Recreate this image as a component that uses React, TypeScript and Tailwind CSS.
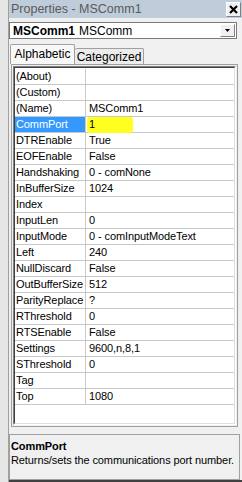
const rows: [string, string][] = [
  ['(About)', ''],
  ['(Custom)', ''],
  ['(Name)', 'MSComm1'],
  ['CommPort', '1'],
  ['DTREnable', 'True'],
  ['EOFEnable', 'False'],
  ['Handshaking', '0 - comNone'],
  ['InBufferSize', '1024'],
  ['Index', ''],
  ['InputLen', '0'],
  ['InputMode', '0 - comInputModeText'],
  ['Left', '240'],
  ['NullDiscard', 'False'],
  ['OutBufferSize', '512'],
  ['ParityReplace', '?'],
  ['RThreshold', '0'],
  ['RTSEnable', 'False'],
  ['Settings', '9600,n,8,1'],
  ['SThreshold', '0'],
  ['Tag', ''],
  ['Top', '1080'],
];

function GridRow({ name, value }: { name: string; value: string }) {
  const selected = name === 'CommPort';
  return (
    <div className="flex h-[16px] border-b border-[#c8c8c8]">
      <div
        className={
          selected
            ? 'flex w-[71px] items-center overflow-hidden whitespace-nowrap border-r border-[#c8c8c8] bg-[#3399ff] pl-[1px] text-white'
            : 'flex w-[71px] items-center overflow-hidden whitespace-nowrap border-r border-[#c8c8c8] pl-[1px]'
        }
      >
        {name}
      </div>
      <div className="flex flex-1 items-center pl-[3px]">
        {selected ? (
          <span className="-ml-[2px] flex h-[16px] w-[46px] items-center rounded-[3px] bg-[#ffff20] pl-[2px]">
            {value}
          </span>
        ) : (
          value
        )}
      </div>
    </div>
  );
}

export default function App() {
  return (
    <div
      className="flex h-[482px] w-[242px] bg-[#f0f0f0] text-black"
      style={{ fontFamily: '"Liberation Sans", Arial, sans-serif' }}
    >
      <div className="w-[9px] border-r border-[#a0a0a0] bg-[#e6e6e6]" />
      <div className="flex flex-1 flex-col">
        <div className="flex h-[18px] items-center bg-[#bfcddb] pl-[2px] pr-[1px]">
          <span className="flex-1 text-[12.5px] text-[#5a5a5a]">Properties - MSComm1</span>
          <div className="flex h-[15px] w-[15px] items-center justify-center border border-[#808080] border-l-white border-t-white bg-[#f0f0f0]">
            <svg width="9" height="9" viewBox="0 0 9 9">
              <path d="M1 1L8 8M8 1L1 8" stroke="black" strokeWidth="2.2" />
            </svg>
          </div>
        </div>

        <div className="mr-[5px] mt-[4px] flex h-[17px] items-center border border-[#7a7a7a] bg-white pl-[3px] text-[12px]">
          <span className="font-bold">MSComm1</span>
          <span className="ml-[4px] flex-1">MSComm</span>
          <div className="mr-[1px] flex h-[13px] w-[15px] items-center justify-center border border-[#808080] border-l-white border-t-white bg-[#f0f0f0]">
            <svg width="5" height="3" viewBox="0 0 5 3">
              <path d="M0 0H5L2.5 3Z" fill="black" />
            </svg>
          </div>
        </div>

        <div className="mt-[5px] flex h-[20px] items-end pl-[1px] text-[12px]">
          <div className="flex h-[20px] w-[65px] items-center justify-center rounded-t-[2px] border border-b-0 border-[#a0a0a0] bg-[#f8f8f8] pb-[1px]">
            Alphabetic
          </div>
          <div className="flex h-[16px] w-[69px] items-center justify-center rounded-t-[2px] border border-b-0 border-l-0 border-[#a0a0a0] bg-[#ececec]">
            Categorized
          </div>
        </div>

        <div className="mr-[4px] ml-[2px] flex h-[363px] flex-col border border-[#a0a0a0] bg-[#f0f0f0] p-[1px]">
          <div className="flex flex-1 flex-col border border-[#808080] border-b-white border-r-white">
            <div className="flex flex-1 flex-col border border-[#404040] border-b-[#e0e0e0] border-r-[#e0e0e0] bg-white pt-[1px] text-[11px] tracking-[-0.1px]">
              {rows.map(([n, v]) => (
                <GridRow key={n} name={n} value={v} />
              ))}
            </div>
          </div>
        </div>

        <div className="mr-[2px] mt-[7px] flex flex-1 flex-col border border-[#a0a0a0] px-[1px] pt-[4px] text-[11px] leading-[14px] tracking-[-0.1px]">
          <span className="font-bold">CommPort</span>
          <span className="whitespace-nowrap">Returns/sets the communications port number.</span>
        </div>
        <div className="h-[2px] bg-[#404040]" />
      </div>
    </div>
  );
}
